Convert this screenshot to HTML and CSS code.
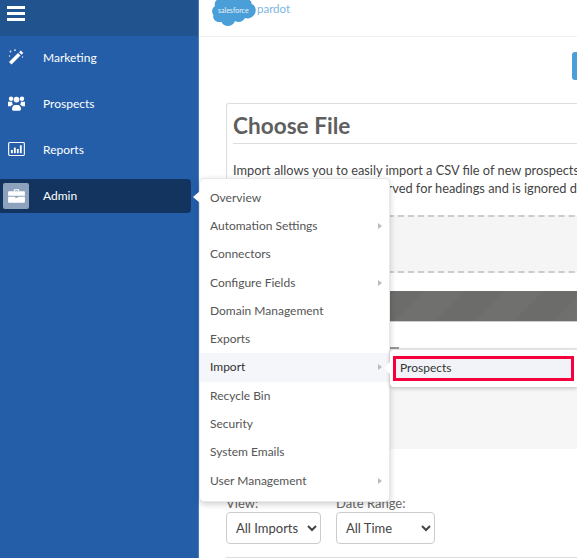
FILE: index.html
```html
<!DOCTYPE html>
<html lang="en">
<head>
    <meta charset="UTF-8">
    <title>Pardot Import</title>
    <link rel="stylesheet" href="styles.css">
</head>
<body>

<div class="app">
    <!-- left navigation -->
    <nav class="sidebar">
        <div class="burger-bar">
            <div class="burger"><span></span><span></span><span></span></div>
        </div>
        <div class="nav-list">
            <a class="nav-item">
                <span class="nav-icon">
                    <svg width="16" height="16" viewBox="0 0 16 16"><path d="M1 13 10 4l2.500 2.500-9 9z" fill="#fff"/><path d="M11 3.300l1.800-1.800 2.500 2.500-1.800 1.800z" fill="#fff"/><g fill="#dfe8f3"><circle cx="2.500" cy="2.500" r=".9"/><circle cx="7" cy="1.200" r=".9"/><circle cx="1.500" cy="7" r=".7"/><circle cx="14.500" cy="8" r=".7"/></g></svg>
                </span>
                Marketing
            </a>
            <a class="nav-item">
                <span class="nav-icon">
                    <svg width="17" height="16" viewBox="0 0 20 18" fill="#fff"><circle cx="3.600" cy="4" r="2.600"/><circle cx="16.400" cy="4" r="2.600"/><circle cx="10" cy="5" r="3.400"/><path d="M0 7.500h5c-.3 1.600.4 2.800 1 3.400-1.200.4-2.200 1.200-2.600 2H0zM20 7.500h-5c.3 1.600-.4 2.800-1 3.400 1.200.4 2.200 1.200 2.600 2H20z"/><path d="M4.700 16.400c0-2.800 1.700-5 3.600-5h3.400c1.900 0 3.600 2.200 3.600 5 0 1-.8 1.600-1.600 1.600H6.300c-.8 0-1.600-.6-1.600-1.600z"/></svg>
                </span>
                Prospects
            </a>
            <a class="nav-item">
                <span class="nav-icon">
                    <svg width="17" height="14" viewBox="0 0 18 15"><rect x=".6" y=".6" width="16.800" height="13.800" rx="1" fill="none" stroke="#fff" stroke-width="1.200"/><g fill="#fff"><rect x="3" y="8.500" width="2" height="3.500"/><rect x="6.200" y="6" width="2" height="6"/><rect x="9.400" y="7.500" width="2" height="4.500"/><rect x="12.600" y="3.500" width="2" height="8.500"/></g></svg>
                </span>
                Reports
            </a>
            <a class="nav-item active">
                <span class="nav-icon admin-icon">
                    <svg width="17" height="14" viewBox="0 0 18 15" fill="#fff"><path d="M6 2.500V1.500C6 .7 6.600 .2 7.300 .2h3.400c.7 0 1.300.5 1.300 1.300v1h-1.300V1.400H7.300v1.100z"/><path d="M1.200 2.500h15.600c.7 0 1.200.5 1.200 1.200v3.500H0V3.700c0-.7.5-1.200 1.200-1.200z"/><path d="M0 8.200h7.500v1.300h3V8.200H18v5.400c0 .7-.5 1.200-1.200 1.200H1.200c-.7 0-1.200-.5-1.200-1.200z"/></svg>
                </span>
                Admin
            </a>
        </div>
    </nav>

    <main class="content">
        <header class="topbar">
            <svg class="cloud" width="44" height="27" viewBox="0 0 44 27"><path d="M3 6C1 -2 12 -3 15 -1L34 -1C38 -1 40 2 39.500 4 44 5 45 12 42 15 40 18 36 19 33 18 31 22 26 23 23 21 21 27 12 28 9.500 22 4 23 0 19 1.500 15 -1 12 0 8 3 6z" fill="#4b9fd8"/><text x="6" y="13" class="cloud-text">salesforce</text></svg>
            <span class="brand">pardot</span>
        </header>

        <div class="toolbar"><span class="blue-btn"></span></div>

        <section class="card">
            <h1>Choose File</h1>
            <p>Import allows you to easily import a CSV file of new prospects or update existing ones.<br>
            The first row of a file is reserved for headings and is ignored during the import.</p>
            <div class="dropzone"></div>
            <div class="stripe-bar"></div>
            <div class="table-head"><span class="tick"></span></div>
            <div class="grey-box"></div>
        </section>

        <div class="filters">
            <label class="filter">View:
                <select class="filter-select wide"><option>All Imports</option></select>
            </label>
            <label class="filter">Date Range:
                <select class="filter-select"><option>All Time</option></select>
            </label>
        </div>
        <div class="bottom-rule"></div>
    </main>
</div>

<!-- admin flyout -->
<div class="menu">
    <div class="menu-item">Overview</div>
    <div class="menu-item more">Automation Settings</div>
    <div class="menu-item">Connectors</div>
    <div class="menu-item more">Configure Fields</div>
    <div class="menu-item">Domain Management</div>
    <div class="menu-item">Exports</div>
    <div class="menu-item more hover">Import</div>
    <div class="menu-item">Recycle Bin</div>
    <div class="menu-item">Security</div>
    <div class="menu-item">System Emails</div>
    <div class="menu-item more">User Management</div>
</div>
<div class="submenu">
    <div class="submenu-item">Prospects</div>
</div>

</body>
</html>
```
FILE: styles.css
```css
* {
    box-sizing: border-box;
}

html, body {
    margin: 0;
    height: 100%;
    overflow: hidden;
}

body {
    position: relative;
    font-family: "Lato", sans-serif;
    background-color: #fff;
    color: #555;
}

.app {
    display: flex;
    height: 558px;
    overflow: hidden;
}

/* sidebar */
.sidebar {
    width: 199px;
    flex: none;
    background-color: #245ea9;
    border-right: 1px solid #4a7cbc;
}

.burger-bar {
    height: 36px;
    padding: 6px 0 0 7px;
    background-color: #21548f;
}

.burger {
    display: flex;
    flex-direction: column;
    gap: 3.600px;
    width: 18px;
}

.burger span {
    height: 2.500px;
    background-color: #fff;
}

.nav-list {
    display: flex;
    flex-direction: column;
    gap: 12px;
    padding-top: 5px;
}

.nav-item {
    display: flex;
    align-items: center;
    height: 34px;
    margin-right: 7px;
    padding-bottom: 2px;
    font-size: 12px;
    color: #fff;
}

.nav-item.active {
    background-color: #12345f;
    border-radius: 0 4px 4px 0;
}

.nav-icon {
    display: flex;
    align-items: center;
    justify-content: center;
    width: 32px;
    height: 26px;
    margin-right: 11px;
}

.admin-icon {
    width: 26px;
    margin-left: 3px;
    margin-right: 14px;
    margin-top: 2px;
    background-color: #8ea2bd;
    border-radius: 2px;
}

/* main column */
.content {
    flex: 1;
    min-width: 0;
}

.topbar {
    display: flex;
    height: 37px;
    padding-left: 13px;
    border-bottom: 1px solid #f0f0f0;
    overflow: hidden;
}

.cloud {
    flex: none;
}

.cloud-text {
    font-size: 7px;
    fill: #e8f3fb;
}

.brand {
    margin-left: 1px;
    font-size: 11.500px;
    line-height: 18px;
    color: #7db6e0;
}

.toolbar {
    height: 66px;
    padding: 15px 0 0 373px;
}

.blue-btn {
    display: block;
    width: 30px;
    height: 28px;
    border-radius: 3px;
    background-color: #4a9fd8;
}

.card {
    width: 420px;
    height: 388px;
    margin-left: 27px;
    padding-left: 6px;
    border: 1px solid #ddd;
    border-bottom: none;
    border-radius: 3px 0 0 0;
    overflow: hidden;
}

.card h1 {
    margin: 0;
    height: 40px;
    font-size: 22.600px;
    line-height: 44px;
    font-weight: 700;
    color: #5f5f5f;
    border-bottom: 1px solid #ddd;
}

.card p {
    margin: 17px 0 0;
    font-size: 12.800px;
    line-height: 18px;
    color: #444;
    white-space: nowrap;
}

.dropzone {
    height: 58px;
    margin: 18px 0 0 -6px;
    background-color: #f5f5f5;
    border-top: 2px dashed #ccc;
    border-bottom: 2px dashed #ccc;
}

.stripe-bar {
    height: 31px;
    margin: 18px 0 0 -6px;
    background: repeating-linear-gradient(135deg, #6c6c6a 0 28px, #70706e 28px 56px);
    border-bottom: 1px solid #ccc;
}

.table-head {
    height: 27px;
    margin-left: -6px;
    border-bottom: 1px solid #e6e6e6;
}

.tick {
    display: block;
    width: 172px;
    height: 27px;
    border-bottom: 2px solid #999;
}

.grey-box {
    height: 100px;
    margin-left: -6px;
    background-color: #f6f6f6;
}

.filters {
    display: flex;
    gap: 15px;
    margin: 3px 0 0 27px;
}

.filter {
    display: flex;
    flex-direction: column;
    font-size: 13px;
    line-height: 18px;
    color: #666;
}

.filter-select {
    width: 99px;
    height: 32px;
    padding: 0 0 0 5px;
    font-family: "Lato", sans-serif;
    font-size: 13px;
    color: #444;
    background-color: #fff;
    border: 1px solid #ccc;
    border-radius: 4px;
}

.filter-select.wide {
    width: 95px;
}

.bottom-rule {
    height: 1px;
    margin: 13px 0 0 27px;
    background-color: #ddd;
}

/* flyouts */
.menu {
    position: absolute;
    left: 199px;
    top: 178px;
    width: 191px;
    height: 324px;
    padding-top: 4.700px;
    background-color: #fff;
    border: 1px solid #e8e8e8;
    border-radius: 5px;
    box-shadow: 0 2px 6px rgba(0, 0, 0, 0.2);
}

.menu::before {
    content: "";
    position: absolute;
    left: -7px;
    top: 12px;
    border-style: solid;
    border-width: 6px 7px 6px 0;
    border-color: transparent #fff transparent transparent;
}

.menu-item {
    position: relative;
    height: 28.300px;
    padding-left: 10px;
    font-size: 12px;
    line-height: 27px;
    color: #555;
}

.menu-item.hover {
    background-color: #f5f6fa;
    color: #333;
}

.menu-item.more::after {
    content: "";
    position: absolute;
    right: 7px;
    top: 11px;
    border-style: solid;
    border-width: 3.500px 0 3.500px 4px;
    border-color: transparent transparent transparent #bbb;
}

.submenu {
    position: absolute;
    left: 390px;
    top: 350px;
    width: 187px;
    height: 37px;
    padding: 6px 0 0 3px;
    background-color: #fff;
    border-radius: 4px 0 0 4px;
    box-shadow: 0 1px 4px rgba(0, 0, 0, 0.25);
}

.submenu::before {
    content: "";
    position: absolute;
    left: -6px;
    top: 12px;
    border-style: solid;
    border-width: 6px 6px 6px 0;
    border-color: transparent #fff transparent transparent;
}

.submenu-item {
    width: 181px;
    height: 25px;
    padding-left: 4px;
    font-size: 12px;
    line-height: 18px;
    color: #333;
    background-color: #f1f3f8;
    border: 3px solid #f5003c;
}
```
